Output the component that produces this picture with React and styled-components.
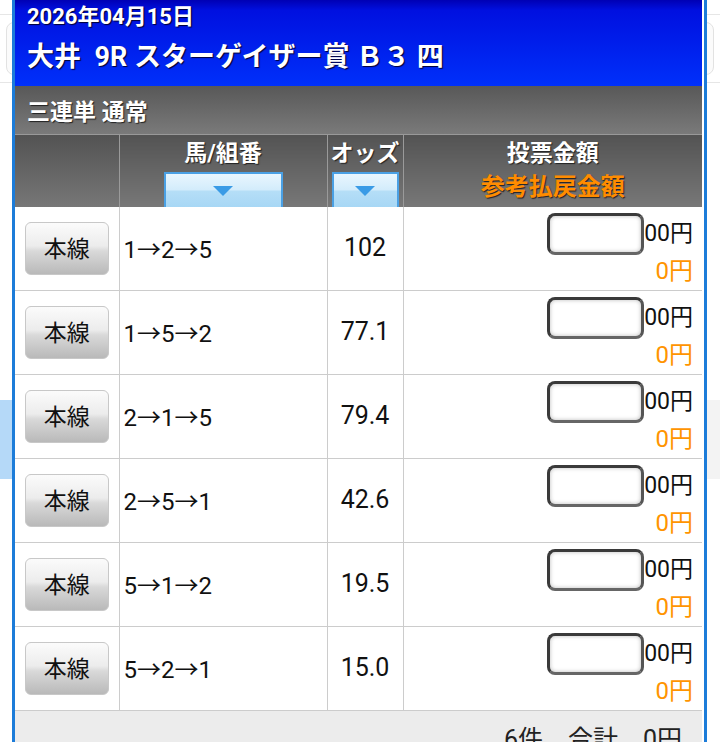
import { createGlobalStyle } from "styled-components";
import styled from "styled-components";

const Global = createGlobalStyle`
  html, body {
    margin: 0;
    padding: 0;
    background: #fff;
    font-family: Roboto, "Noto Sans CJK JP", "Noto Sans", sans-serif;
    overflow: hidden;
  }
`;

// page behind the dialog
const Page = styled.div`
  height: 742px;
  background: #fff;
  padding-top: 14px;
  box-sizing: border-box;
`;
const Rule = styled.div`
  height: 1px;
  background: #e6e6e6;
`;
const SearchBox = styled.div`
  margin: 7px 6px 7px 6px;
  height: 51px;
  border: 1px solid #e2e2e2;
  border-radius: 8px;
  background: #fbfbfb;
`;
const Tabs = styled.div`
  margin-top: 317px;
  display: flex;
  height: 79px;
`;
const Tab = styled.div`
  flex: 1;
  background: ${(p) => (p.$active ? "#b5d9f8" : "#f3f3f3")};
`;

const Modal = styled.div`
  position: fixed;
  left: 12px;
  top: 0;
  width: 695px;
  height: 760px;
  box-sizing: border-box;
  border-left: 3px solid #1c7cd9;
  border-right: 3px solid #1c7cd9;
  background: #fff;
  padding-right: 2px;
  overflow: hidden;
`;

const Head = styled.div`
  height: 86px;
  box-sizing: border-box;
  padding: 3px 12px 0;
  background: linear-gradient(#0000b4 0%, #0010e0 12%, #0030fa 100%);
  color: #fff;
  font-weight: bold;
  text-shadow: 1px 1px 1px #000033;
`;
const DateLine = styled.div`
  font-size: 22px;
  line-height: 28px;
`;
const RaceLine = styled.div`
  font-size: 27px;
  line-height: 36px;
  margin-top: 8px;
  white-space: pre;
`;

const BetType = styled.div`
  height: 49px;
  box-sizing: border-box;
  padding: 0 12px;
  display: flex;
  align-items: center;
  background: linear-gradient(#585858, #7a7a7a);
  color: #fff;
  font-size: 23px;
  font-weight: bold;
  text-shadow: 1px 1px 1px #222;
  border-bottom: 1px solid #999;
`;

const Table = styled.table`
  width: 687px;
  border-collapse: collapse;
  table-layout: fixed;
`;
const Th = styled.th`
  height: 72px;
  padding: 0;
  vertical-align: top;
  background: linear-gradient(#535353, #777);
  border-left: 1px solid #9a9a9a;
  color: #fff;
  font-size: 23px;
  font-weight: bold;
  line-height: 34px;
  text-shadow: 1px 1px 1px #222;
  &:first-child {
    border-left: none;
  }
`;
const ThInner = styled.div`
  height: 72px;
  display: flex;
  flex-direction: column;
  align-items: center;
  padding-top: 2px;
  box-sizing: border-box;
`;
const Sub = styled.div`
  color: #ff8c00;
  font-size: 24px;
  line-height: 32px;
`;
const SortButton = styled.div`
  margin-top: auto;
  width: ${(p) => p.$w}px;
  height: 35px;
  box-sizing: border-box;
  border: 2px solid #4aa0e4;
  border-bottom: none;
  background: linear-gradient(#e9f6fe 0%, #d3ecfb 48%, #b5def7 52%, #a7d7f5 100%);
  display: flex;
  align-items: center;
  justify-content: center;
  &::after {
    content: "";
    width: 0;
    height: 0;
    border-left: 10px solid transparent;
    border-right: 10px solid transparent;
    border-top: 10px solid #3a9be6;
  }
`;

const Row = styled.tr`
  border-bottom: 1px solid #cccccc;
`;
const Td = styled.td`
  height: 80px;
  padding: 0 0 3px;
  border-left: 1px solid #cccccc;
  font-size: ${(p) => p.$size || 24}px;
  color: #111;
  text-align: ${(p) => p.$align || "left"};
  vertical-align: ${(p) => p.$valign || "middle"};
  &:first-child {
    border-left: none;
    padding: 0;
  }
`;
const LineButton = styled.button`
  display: block;
  width: 84px;
  height: 53px;
  margin: 0 auto;
  border: 1px solid #c8c8c8;
  border-radius: 6px;
  background: linear-gradient(#fbfbfb 0%, #ececec 45%, #d9d9d9 55%, #b9b9b9 100%);
  font-family: inherit;
  font-size: 23px;
  color: #111;
  padding: 0 0 3px;
`;
const Combo = styled.span`
  padding-left: 4px;
`;
const Amount = styled.div`
  padding: 6px 9px 0 0;
  display: flex;
  flex-direction: column;
  align-items: flex-end;
  font-size: 23px;
`;
const AmountLine = styled.div`
  display: flex;
  align-items: center;
  line-height: 30px;
`;
const Input = styled.input`
  width: 97px;
  height: 42px;
  box-sizing: border-box;
  border: 3px solid #3a3a3a;
  border-bottom-color: #666;
  border-right-color: #555;
  border-radius: 8px;
  box-shadow: inset 0 0 4px #bbb;
  background: #fff;
  margin: 0;
  outline: none;
`;
const Refund = styled.div`
  color: #ff9400;
  font-size: 24px;
  line-height: 28px;
  margin-top: 2px;
`;

const Footer = styled.div`
  height: 60px;
  background: #ececec;
  text-align: right;
  padding: 8px 20px 0 0;
  font-size: 25px;
  color: #222;
  white-space: pre;
`;

const rows = [
  ["1→2→5", "102"],
  ["1→5→2", "77.1"],
  ["2→1→5", "79.4"],
  ["2→5→1", "42.6"],
  ["5→1→2", "19.5"],
  ["5→2→1", "15.0"],
];

export default function App() {
  return (
    <>
      <Global />
      <Page>
        <Rule />
        <SearchBox />
        <Rule />
        <Tabs>
          <Tab $active />
          <Tab />
        </Tabs>
      </Page>
      <Modal>
        <Head>
          <DateLine>2026年04月15日</DateLine>
          <RaceLine>大井  9R スターゲイザー賞 Ｂ３ 四</RaceLine>
        </Head>
        <BetType>三連単 通常</BetType>
        <Table>
          <colgroup>
            <col style={{ width: 104 }} />
            <col style={{ width: 208 }} />
            <col style={{ width: 76 }} />
            <col />
          </colgroup>
          <thead>
            <tr>
              <Th />
              <Th>
                <ThInner>
                  馬/組番
                  <SortButton $w={119} />
                </ThInner>
              </Th>
              <Th>
                <ThInner>
                  オッズ
                  <SortButton $w={67} />
                </ThInner>
              </Th>
              <Th>
                <ThInner>
                  投票金額
                  <Sub>参考払戻金額</Sub>
                </ThInner>
              </Th>
            </tr>
          </thead>
          <tbody>
            {rows.map(([combo, odds]) => (
              <Row key={combo}>
                <Td>
                  <LineButton>本線</LineButton>
                </Td>
                <Td>
                  <Combo>{combo}</Combo>
                </Td>
                <Td $align="center" $size={25}>{odds}</Td>
                <Td $valign="top">
                  <Amount>
                    <AmountLine>
                      <Input type="text" />
                      00円
                    </AmountLine>
                    <Refund>0円</Refund>
                  </Amount>
                </Td>
              </Row>
            ))}
          </tbody>
        </Table>
        <Footer>6件　合計　0円</Footer>
      </Modal>
    </>
  );
}
